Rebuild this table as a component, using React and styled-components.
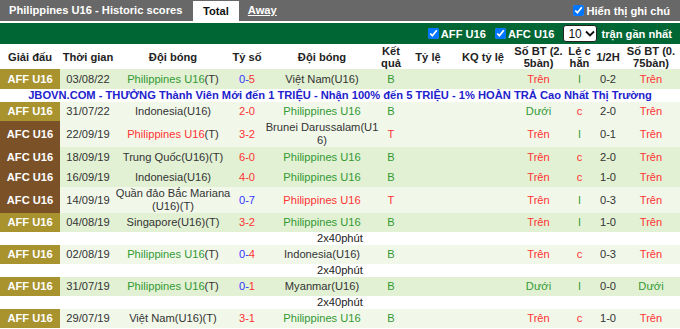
import React from "react";
import styled, { createGlobalStyle } from "styled-components";

const GlobalStyle = createGlobalStyle`
  body {
    margin: 0;
    background: #fff;
    font-family: "Liberation Sans", Arial, sans-serif;
    font-size: 11.15px;
    color: #333;
  }
`;

const COLS = "60px 56px 114px 34px 116px 22px 52px 58px 53px 29px 28px 58px";

const COLORS = {
  g: "#339933",
  r: "#ff3333",
  b: "#3333ff",
  k: "#333333",
};

const rows = [
  { type: "match", lg: "AFF U16", date: "03/08/22", home: [["Philippines U16", "g"], ["(T)", "k"]], score: [["0-", "b"], ["5", "r"]], away: [["Việt Nam(U16)", "k"]], res: ["B", "g"], bt: ["Trên", "r"], lc: ["l", "g"], half: "0-2", bt2: ["Trên", "r"], shade: "dark", h: 20 },
  { type: "ad" },
  { type: "match", lg: "AFF U16", date: "31/07/22", home: [["Indonesia(U16)", "k"]], score: [["2-0", "r"]], away: [["Philippines U16", "g"]], res: ["B", "g"], bt: ["Dưới", "g"], lc: ["c", "r"], half: "2-0", bt2: ["Trên", "r"], shade: "light", h: 19 },
  { type: "match", lg: "AFC U16", date: "22/09/19", home: [["Philippines U16", "r"], ["(T)", "k"]], score: [["3-2", "r"]], away: [["Brunei Darussalam(U1", "k"], ["br"], ["6)", "k"]], res: ["T", "r"], bt: ["Trên", "r"], lc: ["l", "g"], half: "0-1", bt2: ["Trên", "r"], shade: "light", h: 26 },
  { type: "match", lg: "AFC U16", date: "18/09/19", home: [["Trung Quốc(U16)(T)", "k"]], score: [["6-0", "r"]], away: [["Philippines U16", "g"]], res: ["B", "g"], bt: ["Trên", "r"], lc: ["c", "r"], half: "2-0", bt2: ["Trên", "r"], shade: "dark", h: 20 },
  { type: "match", lg: "AFC U16", date: "16/09/19", home: [["Indonesia(U16)", "k"]], score: [["4-0", "r"]], away: [["Philippines U16", "g"]], res: ["B", "g"], bt: ["Trên", "r"], lc: ["c", "r"], half: "1-0", bt2: ["Trên", "r"], shade: "dark", h: 20 },
  { type: "match", lg: "AFC U16", date: "14/09/19", home: [["Quần đảo Bắc Mariana", "k"], ["br"], ["(U16)(T)", "k"]], score: [["0-7", "b"]], away: [["Philippines U16", "r"]], res: ["T", "r"], bt: ["Trên", "r"], lc: ["l", "g"], half: "0-3", bt2: ["Trên", "r"], shade: "light", h: 26 },
  { type: "match", lg: "AFF U16", date: "04/08/19", home: [["Singapore(U16)(T)", "k"]], score: [["3-2", "r"]], away: [["Philippines U16", "g"]], res: ["B", "g"], bt: ["Trên", "r"], lc: ["l", "g"], half: "1-0", bt2: ["Trên", "r"], shade: "dark", h: 19 },
  { type: "note" },
  { type: "match", lg: "AFF U16", date: "02/08/19", home: [["Philippines U16", "g"], ["(T)", "k"]], score: [["0-", "b"], ["4", "r"]], away: [["Indonesia(U16)", "k"]], res: ["B", "g"], bt: ["Trên", "r"], lc: ["c", "r"], half: "0-3", bt2: ["Trên", "r"], shade: "light", h: 19 },
  { type: "note" },
  { type: "match", lg: "AFF U16", date: "31/07/19", home: [["Philippines U16", "g"], ["(T)", "k"]], score: [["0-", "b"], ["1", "r"]], away: [["Myanmar(U16)", "k"]], res: ["B", "g"], bt: ["Dưới", "g"], lc: ["l", "g"], half: "0-0", bt2: ["Dưới", "g"], shade: "dark", h: 19 },
  { type: "note" },
  { type: "match", lg: "AFF U16", date: "29/07/19", home: [["Việt Nam(U16)(T)", "k"]], score: [["3-1", "r"]], away: [["Philippines U16", "g"]], res: ["B", "g"], bt: ["Trên", "r"], lc: ["c", "r"], half: "1-0", bt2: ["Trên", "r"], shade: "light", h: 19 },
];

function Colored({ parts }) {
  return parts.map((p, i) =>
    p[0] === "br" ? <br key={i} /> : <Tone key={i} $c={p[1]}>{p[0]}</Tone>
  );
}

export default function App() {
  return (
    <>
      <GlobalStyle />
      <Wrap>
        <TopBar>
          <Title>Philippines U16 - Historic scores</Title>
          <Tab $active>Total</Tab>
          <Tab>Away</Tab>
          <TopRight>
            <Check type="checkbox" defaultChecked />
            <span>Hiển thị ghi chú</span>
          </TopRight>
        </TopBar>

        <FilterBar>
          <Check type="checkbox" defaultChecked />
          <span>AFF U16</span>
          <Check type="checkbox" defaultChecked $gap />
          <span>AFC U16</span>
          <Select>
            10
            <svg width="10" height="7" viewBox="0 0 10 7">
              <path d="M1 1.5 L5 5.5 L9 1.5" fill="none" stroke="#111" strokeWidth="1.8" />
            </svg>
          </Select>
          <span>trận gần nhất</span>
        </FilterBar>

        <HeadRow>
          <span>Giải đấu</span>
          <span>Thời gian</span>
          <span>Đội bóng</span>
          <span>Tỷ số</span>
          <span>Đội bóng</span>
          <span>Kết<br />quả</span>
          <span>Tỷ lệ</span>
          <span>KQ tỷ lệ</span>
          <span>Số BT (2.<br />5bàn)</span>
          <span>Lẻ c<br />hẵn</span>
          <span>1/2H</span>
          <span>Số BT (0.<br />75bàn)</span>
        </HeadRow>

        {rows.map((r, i) => {
          if (r.type === "ad") {
            return (
              <AdRow key={i}>
                JBOVN.COM - THƯỞNG Thành Viên Mới đến 1 TRIỆU - Nhận 100% đến 5 TRIỆU - 1% HOÀN TRẢ Cao Nhất Thị Trường
              </AdRow>
            );
          }
          if (r.type === "note") {
            return (
              <NoteRow key={i}>
                <span>2x40phút</span>
              </NoteRow>
            );
          }
          return (
            <MatchRow key={i} $shade={r.shade} style={{ height: r.h }}>
              <League $afc={r.lg.startsWith("AFC")}>{r.lg}</League>
              <Cell>{r.date}</Cell>
              <Cell><span><Colored parts={r.home} /></span></Cell>
              <Cell><span><Colored parts={r.score} /></span></Cell>
              <Cell><span><Colored parts={r.away} /></span></Cell>
              <Cell><Tone $c={r.res[1]}>{r.res[0]}</Tone></Cell>
              <Cell />
              <Cell />
              <Cell><Tone $c={r.bt[1]}>{r.bt[0]}</Tone></Cell>
              <Cell><Tone $c={r.lc[1]}>{r.lc[0]}</Tone></Cell>
              <Cell>{r.half}</Cell>
              <Cell><Tone $c={r.bt2[1]}>{r.bt2[0]}</Tone></Cell>
            </MatchRow>
          );
        })}
      </Wrap>
    </>
  );
}

// styles

const Wrap = styled.div`
  width: 680px;
  overflow: hidden;
`;

const TopBar = styled.div`
  display: flex;
  align-items: flex-end;
  height: 21px;
  background: #686868;
  border-bottom: 2px solid #fff;
  color: #fff;
  font-weight: bold;
`;

const Title = styled.div`
  padding-left: 9px;
  width: 184px;
  line-height: 21px;
  white-space: nowrap;
`;

const Tab = styled.div`
  height: ${(p) => (p.$active ? "20px" : "21px")};
  line-height: ${(p) => (p.$active ? "20px" : "21px")};
  padding: 0 10px;
  background: ${(p) => (p.$active ? "#fff" : "transparent")};
  color: ${(p) => (p.$active ? "#111" : "#fff")};
  text-decoration: ${(p) => (p.$active ? "none" : "underline")};
  padding-left: ${(p) => (p.$active ? "10px" : "9px")};
`;

const TopRight = styled.div`
  margin-left: auto;
  padding-right: 10px;
  display: flex;
  align-items: center;
  height: 21px;
  white-space: nowrap;
`;

const Check = styled.input`
  width: 11px;
  height: 11px;
  margin: 0 2px 0 ${(p) => (p.$gap ? "5px" : "0")};
  accent-color: #0075ff;
`;

const FilterBar = styled.div`
  display: flex;
  align-items: center;
  justify-content: flex-end;
  height: 21px;
  padding-right: 4px;
  background: #006633;
  color: #fff;
  font-weight: bold;
  white-space: nowrap;

  span {
    margin-right: 4px;
  }
`;

const Select = styled.div`
  display: flex;
  align-items: center;
  gap: 3px;
  width: 34px;
  height: 17px;
  box-sizing: border-box;
  margin: 0 4px 0 5px;
  padding-left: 4px;
  background: #fff;
  border: 1.5px solid #222;
  border-radius: 3px;
  color: #111;
  font-weight: normal;
  font-size: 12px;
`;

const HeadRow = styled.div`
  display: grid;
  grid-template-columns: ${COLS};
  height: 25px;
  align-items: center;
  text-align: center;
  font-weight: bold;
  line-height: 12px;
  color: #222;
  white-space: nowrap;
`;

const MatchRow = styled.div`
  display: grid;
  grid-template-columns: ${COLS};
  background: ${(p) => (p.$shade === "dark" ? "#e2f1d4" : "#f1f8ea")};
  line-height: 13px;
`;

const Cell = styled.div`
  display: flex;
  align-items: center;
  justify-content: center;
  text-align: center;
  white-space: nowrap;
  color: #333;
`;

const League = styled(Cell)`
  background: ${(p) => (p.$afc ? "#7b5228" : "#a8932f")};
  color: #fff;
  font-weight: bold;
`;

const Tone = styled.span`
  color: ${(p) => COLORS[p.$c]};
`;

const AdRow = styled.div`
  height: 13px;
  line-height: 13px;
  text-align: center;
  white-space: nowrap;
  font-weight: bold;
  color: #2222cc;
  background: #fff;
`;

const NoteRow = styled.div`
  height: 13px;
  line-height: 13px;
  padding-left: 317px;
  color: #222;
  background: #fff;
`;
